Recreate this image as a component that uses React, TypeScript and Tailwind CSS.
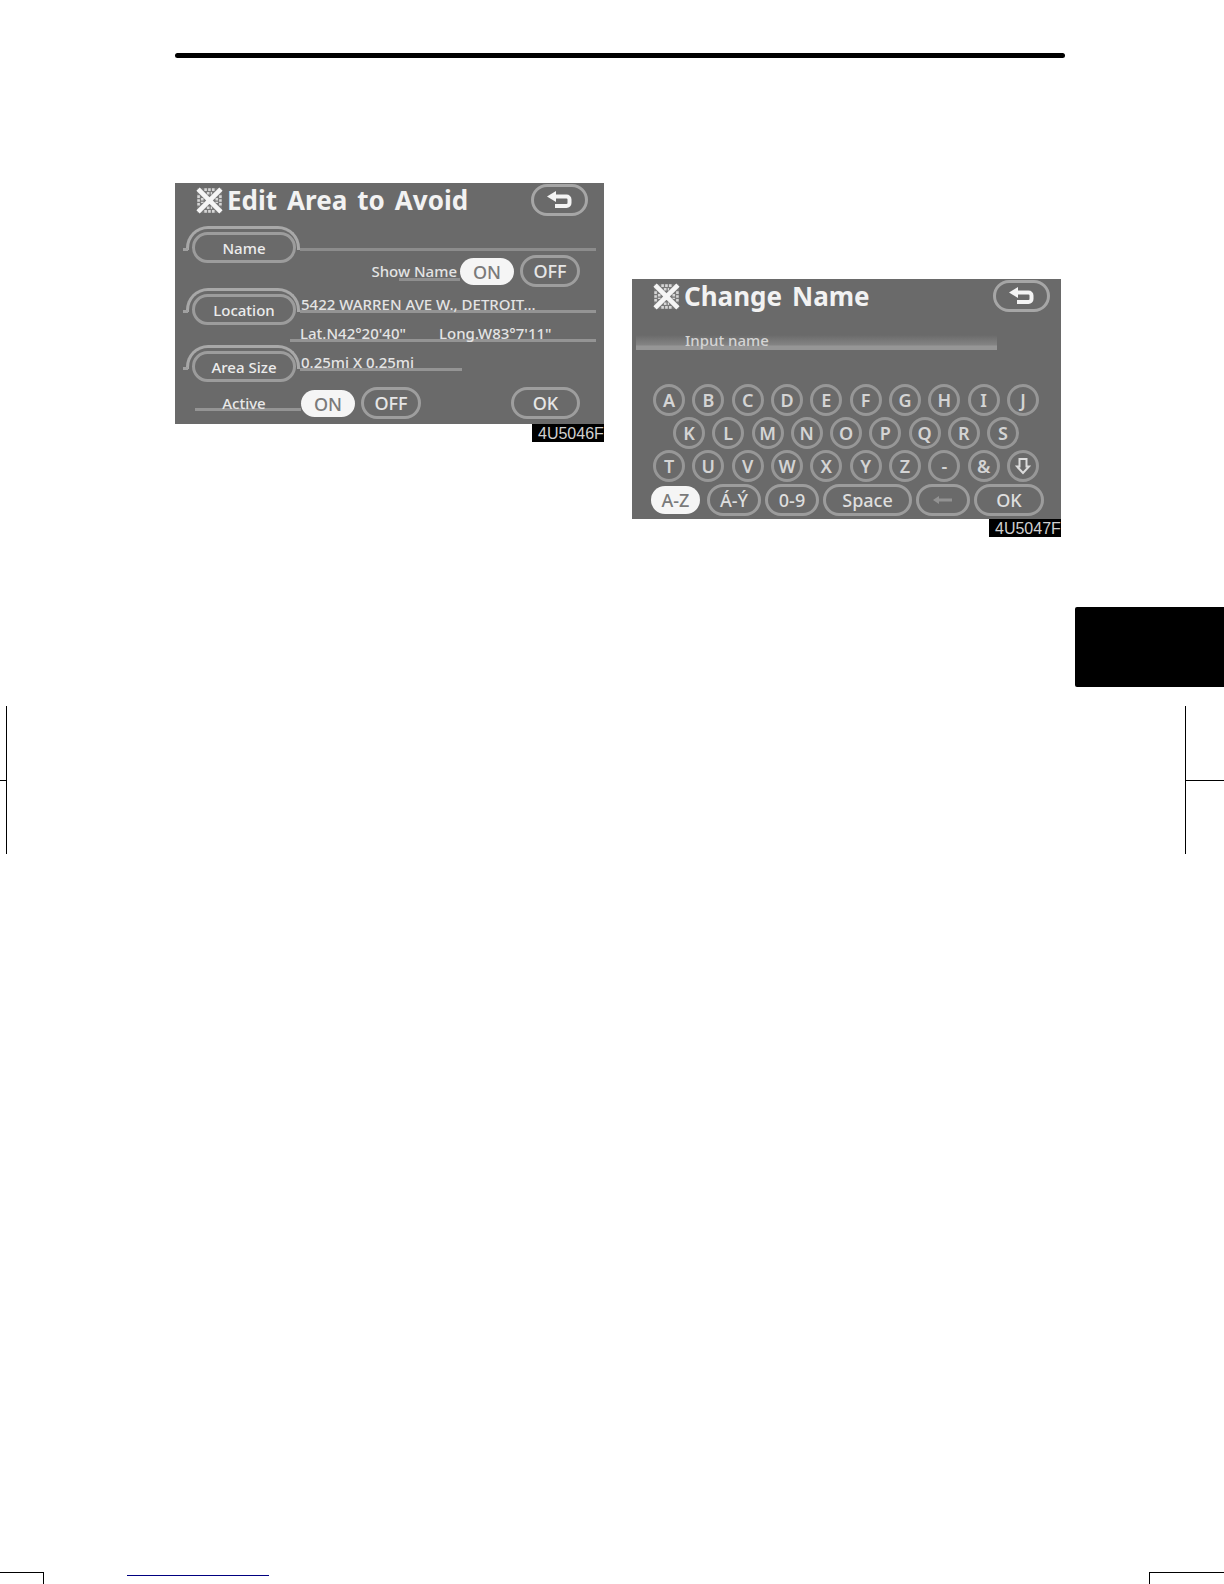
import { useState } from "react";
import type { ReactNode } from "react";

function AvoidIcon() {
  return (
    <svg width="27" height="27" viewBox="0 0 26 26" aria-hidden="true" className="shrink-0">
      <rect x="1" y="1" width="24" height="24" fill="#7a7a7a" />
      <path
        d="M8 2.500H18M10.500 6H15.500M8 23.500H18M10.500 20H15.500M2.500 8V18M6 10.500V15.500M23.500 8V18M20 10.500V15.500"
        stroke="#d6d6d6"
        strokeWidth="2.500"
        strokeDasharray="2.500 1.200"
      />
      <path d="M2 2 24 24M24 2 2 24" stroke="#f6f6f6" strokeWidth="4.500" />
    </svg>
  );
}

function BackButton() {
  return (
    <button
      type="button"
      aria-label="Back"
      className="flex h-8 w-[57px] items-center justify-center rounded-full border-[3px] border-[#a6a6a6]"
    >
      <svg width="26" height="18" viewBox="0 0 26 18" aria-hidden="true">
        <path d="M0 5.500 9 0V11Z" fill="#f4f4f4" />
        <path d="M7 5.500H19.500a3 3 0 0 1 3 3V12a3 3 0 0 1-3 3H8" fill="none" stroke="#f4f4f4" strokeWidth="4" />
      </svg>
    </button>
  );
}

function Header({ words, className }: { words: string[]; className: string }) {
  return (
    <header className={className}>
      <div className="flex items-center gap-1 pt-[2px]">
        <AvoidIcon />
        <h2 className="flex gap-[10px] text-[26px] font-bold leading-[28px] text-[#f2f2f2]">
          {words.map((w) => (
            <span key={w}>{w}</span>
          ))}
        </h2>
      </div>
      <BackButton />
    </header>
  );
}

function Figure({ code, className, children }: { code: string; className: string; children: ReactNode }) {
  return (
    <figure className={className}>
      <div className="bg-[#6a6a6a]">{children}</div>
      <figcaption className="ml-auto h-[18px] w-[72px] overflow-hidden bg-black pl-[6px] font-['Liberation_Sans',sans-serif] text-[16px] leading-[19px] text-[#d0d0d0]">
        {code}
      </figcaption>
    </figure>
  );
}

function TabButton({ label }: { label: string }) {
  return (
    <div className="relative h-[37px] w-[117px] pl-[9px] pt-[6px]">
      <span className="absolute left-[3px] top-0 h-[24px] w-[114px] rounded-t-[22px] border-[3px] border-b-0 border-[#a8a8a8]" />
      <span className="absolute left-0 top-[22px] h-[3px] w-[5px] bg-[#a0a0a0]" />
      <button
        type="button"
        className="relative h-[31px] w-[104px] rounded-full border-[3px] border-[#9c9c9c] text-[15px] font-medium leading-[24px] text-[#ececec]"
      >
        {label}
      </button>
    </div>
  );
}

function OnOff({ name }: { name: string }) {
  const [on, setOn] = useState(true);
  const active = "h-[27px] w-[54px] rounded-full bg-[#f5f5f5] text-[18px] font-medium leading-[28px] text-[#7a7a7a]";
  const idle =
    "h-8 w-[60px] rounded-full border-[3px] border-[#9e9e9e] text-[18px] font-medium leading-[26px] text-[#e6e6e6]";
  return (
    <div role="group" aria-label={name} className="flex items-center gap-[6px]">
      <button type="button" aria-pressed={on} onClick={() => setOn(true)} className={on ? active : idle}>
        ON
      </button>
      <button type="button" aria-pressed={!on} onClick={() => setOn(false)} className={on ? idle : active}>
        OFF
      </button>
    </div>
  );
}

function EditArea() {
  return (
    <div className="pb-[5px]">
      <Header
        words={["Edit", "Area", "to", "Avoid"]}
        className="flex items-start justify-between pl-[21px] pr-4 pt-px"
      />
      <div className="flex pl-2 pr-2 pt-[10px]">
        <div className="flex flex-col">
          <TabButton label="Name" />
          <div className="pt-[25px]">
            <TabButton label="Location" />
          </div>
          <div className="pt-5">
            <TabButton label="Area Size" />
          </div>
        </div>
        <div className="flex-1 text-[15px] font-medium leading-[20px] text-[#e4e4e4]">
          <div className="h-[25px] border-b-[3px] border-[#8c8c8c]" />
          <div className="mt-1 flex h-8 items-center justify-end pr-4">
            <span className="relative whitespace-nowrap pr-[3px]">
              <span className="absolute bottom-0 left-[28px] right-0 h-[3px] bg-[#8f8f8f]" />
              <span className="relative">Show Name</span>
            </span>
            <OnOff name="Show Name" />
          </div>
          <div className="flex h-[26px] items-end border-b-[3px] border-[#949494] pl-px">
            <span className="-mb-1 whitespace-nowrap">5422 WARREN AVE W., DETROIT...</span>
          </div>
          <div className="-ml-[10px] flex h-[29px] items-end border-b-[3px] border-[#949494] pl-[10px]">
            <span className="-mb-1 w-[139px]">Lat.N42°20'40"</span>
            <span className="-mb-1">Long.W83°7'11"</span>
          </div>
          <div className="flex h-[29px] w-[162px] items-end border-b-[3px] border-[#949494] pl-px">
            <span className="-mb-1">0.25mi X 0.25mi</span>
          </div>
        </div>
      </div>
      <div className="flex items-center pl-5 pr-6 pt-[5px]">
        <span className="flex h-[24px] w-[106px] items-end justify-center self-start border-b-[3px] border-[#949494] pr-[8px] text-[15px] font-medium leading-[20px] text-[#e8e8e8]">
          <span className="-mb-[5px]">Active</span>
        </span>
        <OnOff name="Active" />
        <button
          type="button"
          className="ml-auto h-8 w-[69px] rounded-full border-[3px] border-[#9e9e9e] text-[18px] font-medium leading-[26px] text-[#e6e6e6]"
        >
          OK
        </button>
      </div>
    </div>
  );
}

function KeyRow({ keys, className }: { keys: string; className: string }) {
  return (
    <div className={className}>
      {keys.split("").map((k) => (
        <button
          key={k}
          type="button"
          aria-label={k === "↓" ? "More symbols" : k}
          className="flex size-8 items-center justify-center rounded-full border-[3px] border-[#979797] text-[18px] font-semibold leading-[24px] text-[#d4d4d4]"
        >
          {k === "↓" ? (
            <svg width="16" height="18" viewBox="0 0 16 18" aria-hidden="true">
              <path d="M4.500 2H11.500V9.500H14L8 16 2 9.500H4.500Z" fill="none" stroke="#dcdcdc" strokeWidth="2" />
            </svg>
          ) : (
            k
          )}
        </button>
      ))}
    </div>
  );
}

const wide = "h-8 rounded-full border-[3px] border-[#9c9c9c] text-[18px] font-medium leading-[26px] text-[#dedede]";

function ChangeName() {
  return (
    <div className="pb-[3px]">
      <Header words={["Change", "Name"]} className="flex items-start justify-between pl-[21px] pr-[11px] pt-px" />
      <div className="pl-1 pr-16 pt-[18px]">
        <input
          aria-label="Input name"
          placeholder="Input name"
          className="block h-[20px] w-full bg-[linear-gradient(to_bottom,#6a6a6a_25%,#848484_75%,#969696_80%)] pl-[49px] text-[15px] font-medium leading-[20px] text-white outline-none placeholder:text-[#d4d4d4] placeholder:opacity-100"
        />
      </div>
      <div className="flex flex-col gap-px pt-[34px]">
        <KeyRow keys="ABCDEFGHIJ" className="flex justify-between pl-[21px] pr-[22px]" />
        <KeyRow keys="KLMNOPQRS" className="flex justify-between pl-[41px] pr-[42px]" />
        <KeyRow keys="TUVWXYZ-&↓" className="flex justify-between pl-[21px] pr-[22px]" />
      </div>
      <div className="flex items-center justify-between pl-[19px] pr-[17px] pt-[2px]">
        <button
          type="button"
          className="h-[28px] w-[49px] rounded-full bg-[#f5f5f5] text-[18px] font-medium leading-[28px] text-[#7a7a7a]"
        >
          A-Z
        </button>
        <div className="flex gap-1">
          <button type="button" className={`${wide} w-[54px]`}>Á-Ý</button>
          <button type="button" className={`${wide} w-[54px]`}>0-9</button>
          <button type="button" className={`${wide} w-[89px]`}>Space</button>
          <button type="button" aria-label="Delete" className={`${wide} flex w-[54px] items-center justify-center`}>
            <svg width="20" height="10" viewBox="0 0 20 10" aria-hidden="true">
              <path d="M0 5 6 1V9ZM5 3.500H19V6.500H5Z" fill="#929292" />
            </svg>
          </button>
          <button type="button" className={`${wide} w-[70px]`}>OK</button>
        </div>
      </div>
    </div>
  );
}

export default function App() {
  return (
    <main className="flex min-h-screen flex-col overflow-hidden bg-white font-['Noto_Sans',sans-serif]">
      <div className="ml-[175px] mr-[159px] mt-[53px] h-[5px] rounded-full bg-black" />
      <section className="grid grid-cols-2 items-start gap-7 pl-[175px] pr-[163px] pt-[125px]">
        <Figure code="4U5046F" className="">
          <EditArea />
        </Figure>
        <Figure code="4U5047F" className="pt-24">
          <ChangeName />
        </Figure>
      </section>
      <div className="mt-[70px] h-20 w-[149px] self-end rounded-l-[2px] bg-black" />
      <div className="mt-[19px] flex h-[148px] justify-between">
        <div className="flex items-center border-r border-black">
          <span className="h-px w-[6px] bg-black" />
        </div>
        <div className="flex items-center border-l border-black">
          <span className="h-px w-[38px] bg-black" />
        </div>
      </div>
      <footer className="mt-auto flex h-3">
        <span className="w-[44px] border-r border-t border-black" />
        <span className="ml-[83px] mt-[3px] h-px w-[142px] bg-[#000080]" />
        <span className="ml-auto w-[75px] border-l border-t border-black" />
      </footer>
    </main>
  );
}
